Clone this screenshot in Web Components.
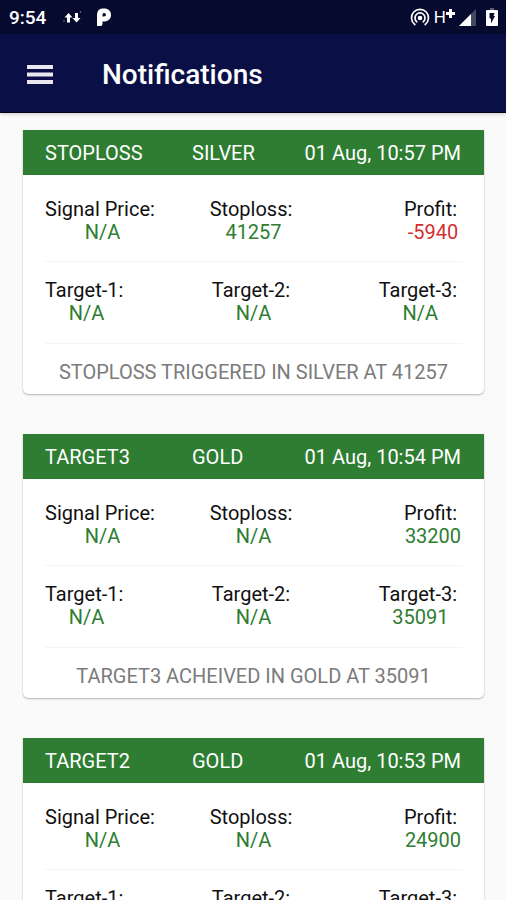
<!DOCTYPE html>
<html lang="en">
<head>
<meta charset="utf-8">
<meta name="viewport" content="width=device-width, initial-scale=1">
<title>Notifications</title>
<style>
  body { margin: 0; background: #fafafa; font-family: Roboto, sans-serif; font-size: 20px; line-height: 23px; color: #111; }
  html { overflow-x: hidden; scrollbar-width: none; }
  main { display: flex; flex-direction: column; gap: 40px; padding: 17px 22px 40px 23px; }
</style>
</head>
<body>
<status-bar time="9:54"></status-bar>
<app-bar>Notifications</app-bar>
<main>
  <signal-card kind="STOPLOSS" symbol="SILVER" date="01 Aug, 10:57 PM">
    <signal-row>
      <signal-value label="Signal Price:">N/A</signal-value>
      <signal-value label="Stoploss:">41257</signal-value>
      <signal-value label="Profit:" loss>-5940</signal-value>
    </signal-row>
    <signal-row>
      <signal-value label="Target-1:">N/A</signal-value>
      <signal-value label="Target-2:">N/A</signal-value>
      <signal-value label="Target-3:">N/A</signal-value>
    </signal-row>
    <span slot="message">STOPLOSS TRIGGERED IN SILVER AT 41257</span>
  </signal-card>
  <signal-card kind="TARGET3" symbol="GOLD" date="01 Aug, 10:54 PM">
    <signal-row>
      <signal-value label="Signal Price:">N/A</signal-value>
      <signal-value label="Stoploss:">N/A</signal-value>
      <signal-value label="Profit:">33200</signal-value>
    </signal-row>
    <signal-row>
      <signal-value label="Target-1:">N/A</signal-value>
      <signal-value label="Target-2:">N/A</signal-value>
      <signal-value label="Target-3:">35091</signal-value>
    </signal-row>
    <span slot="message">TARGET3 ACHEIVED IN GOLD AT 35091</span>
  </signal-card>
  <signal-card kind="TARGET2" symbol="GOLD" date="01 Aug, 10:53 PM">
    <signal-row>
      <signal-value label="Signal Price:">N/A</signal-value>
      <signal-value label="Stoploss:">N/A</signal-value>
      <signal-value label="Profit:">24900</signal-value>
    </signal-row>
    <signal-row>
      <signal-value label="Target-1:">N/A</signal-value>
      <signal-value label="Target-2:">N/A</signal-value>
      <signal-value label="Target-3:">N/A</signal-value>
    </signal-row>
  </signal-card>
</main>
<script>
  class BaseElement extends HTMLElement {
    connectedCallback() {
      if (!this.shadowRoot) this.attachShadow({ mode: 'open' }).innerHTML = this.template();
    }
    attr(name) { return this.getAttribute(name) || ''; }
  }

  customElements.define('status-bar', class extends BaseElement {
    template() {
      return `<style>
        :host { display: flex; align-items: center; height: 34px; padding: 0 8px 0 9px; background: #050a2e; color: #fff; font-size: 19px; font-weight: 500; }
        svg { display: block; flex: none; }
        .net { margin-left: 17px; } .app { margin-left: 14px; }
        .right { display: flex; align-items: center; margin-left: auto; }
        .h { display: flex; margin-left: 4px; font-size: 17px; font-weight: 400; }
        .signal { margin-left: 4px; } .battery { margin-left: 10px; }
      </style>
      <span>${this.attr('time')}</span>
      <svg class="net" width="19" height="16" viewBox="0 0 19 16" fill="#fff" aria-hidden="true">
        <path d="M5.500 4 L9.500 8.500 H7 V13.500 H4 V8.500 H1.500Z M13.500 13.500 L9.500 9 H12 V4 H15 V9 H17.500Z"/>
        <circle cx="1" cy="12" r=".8" opacity=".5"/><circle cx="17.500" cy="3" r=".8" opacity=".5"/>
      </svg>
      <svg class="app" width="16" height="20" viewBox="0 0 16 20" aria-hidden="true">
        <path fill="#fff" fill-rule="evenodd" d="M2 4 C3 2 5 1.500 8 1.500 C12.500 1.500 15 4 15 8 C15 12 12 14.500 8 14.500 H6.500 V17 Q6.500 19 4.500 19 H1 V8 Q1 5.500 2 4Z M8 6 Q6.500 6 6.500 7.500 V9.500 H8 Q10 9.500 10 7.800 Q10 6 8 6Z"/>
      </svg>
      <span class="right">
        <svg width="20" height="20" viewBox="0 0 20 20" fill="none" stroke="#fff" stroke-width="1.700" stroke-linecap="round" aria-hidden="true">
          <path d="M4.800 17.500 A8.500 8.500 0 1 1 15.200 17.500"/><path d="M6.800 14.800 A5 5 0 1 1 13.200 14.800"/><circle cx="10" cy="11" r="1.500" fill="#fff"/>
        </svg>
        <span class="h">H<svg width="9" height="16" viewBox="0 0 9 16" fill="#fff" aria-hidden="true"><path d="M3 3 H6 V6 H9 V9 H6 V12 H3 V9 H0 V6 H3Z"/></svg></span>
        <svg class="signal" width="17" height="17" viewBox="0 0 17 17" aria-hidden="true"><path fill="#fff" opacity=".25" d="M0 17 L17 0 V17Z"/><path fill="#fff" d="M0 17 L12 5 V17Z"/></svg>
        <svg class="battery" width="12" height="20" viewBox="0 0 12 20" aria-hidden="true"><path fill="#fff" opacity=".35" d="M4 1 H8 V3 H4Z"/><path fill="#fff" d="M1 3 H11 Q12 3 12 4 V18 Q12 19 11 19 H1 Q0 19 0 18 V4 Q0 3 1 3Z"/><path fill="#050a2e" d="M3.500 6 H8.500 L7.500 9 H9 L5 16.500 V11.500 H3.500Z"/></svg>
      </span>`;
    }
  });

  customElements.define('app-bar', class extends BaseElement {
    template() {
      return `<style>
        :host { display: flex; align-items: center; gap: 48px; box-sizing: border-box; height: 79px; padding: 3px 26px 0; background: #0a1046; color: #fff; border-bottom: 1px solid #030516; box-shadow: 0 1px 4px #0003; }
        button { display: block; padding: 0; border: 0; background: none; }
        svg { display: block; }
        h1 { margin: 0; font-size: 28px; line-height: 32px; font-weight: 500; }
      </style>
      <button type="button" aria-label="Open menu"><svg width="28" height="20" viewBox="0 0 28 20" fill="#e8e8ee"><path d="M1 0H27V4H1Z M1 7.500H27V11.500H1Z M1 15H27V19H1Z"/></svg></button>
      <h1><slot></slot></h1>`;
    }
  });

  customElements.define('signal-card', class extends BaseElement {
    template() {
      return `<style>
        :host { display: block; background: #fff; border-radius: 1px 1px 5px 5px; box-shadow: 0 1px 2px #0004, 0 0 1px #0002; }
        header { display: grid; grid-template-columns: minmax(0, 147px) 1fr auto; padding: 12px 23px 10px 22px; background: #2e7d32; color: #fff; }
        footer { padding: 17px 22px 10px; text-align: center; color: #7b7b7b; }
      </style>
      <header><span>${this.attr('kind')}</span><span>${this.attr('symbol')}</span><time>${this.attr('date')}</time></header>
      <slot></slot>
      <footer><slot name="message"></slot></footer>`;
    }
  });

  customElements.define('signal-row', class extends BaseElement {
    template() {
      return `<style>
        :host { display: grid; grid-template-columns: 1fr auto 1fr; margin: 0 22px; padding: 17px 0 18px; border-bottom: 1px solid #f4f4f4; }
        :host(:first-child) { padding: 23px 0 17px; }
        ::slotted(:last-child) { justify-self: end; }
        ::slotted(:first-child) { justify-self: start; }
      </style><slot></slot>`;
    }
  });

  customElements.define('signal-value', class extends BaseElement {
    template() {
      return `<style>
        :host { display: block; }
        .label { white-space: pre; }
        .value { text-align: center; color: #2e7d32; }
        :host([loss]) .value { color: #d32f2f; }
      </style><div class="label">${this.attr('label')} </div><div class="value"><slot></slot></div>`;
    }
  });
</script>
</body>
</html>
